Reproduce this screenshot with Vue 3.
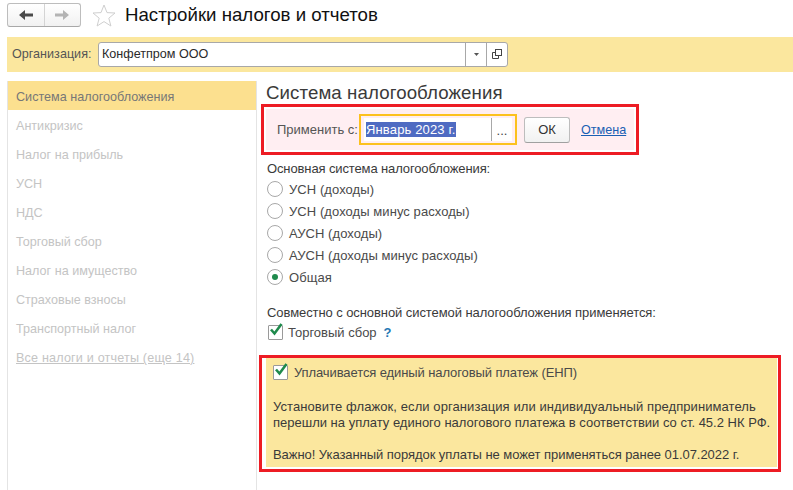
<script setup>
const navItems = ['Система налогообложения','Антикризис','Налог на прибыль','УСН','НДС','Торговый сбор','Налог на имущество','Страховые взносы','Транспортный налог']
const radios = [
  { label: 'УСН (доходы)', on: false },
  { label: 'УСН (доходы минус расходы)', on: false },
  { label: 'АУСН (доходы)', on: false },
  { label: 'АУСН (доходы минус расходы)', on: false },
  { label: 'Общая', on: true }
]
</script>

<template>
  <div class="page">
    <header class="top">
      <div class="navgroup">
        <button class="navbtn">
          <svg width="16" height="12" viewBox="0 0 16 12"><path d="M1 6 L7 1 V4.5 H15 V7.5 H7 V11 Z" fill="#4a4a4a"/></svg>
        </button>
        <button class="navbtn">
          <svg width="16" height="12" viewBox="0 0 16 12"><path d="M15 6 L9 1 V4.5 H1 V7.5 H9 V11 Z" fill="#b4b4b4"/></svg>
        </button>
      </div>
      <svg class="star" width="24" height="23" viewBox="0 0 24 23"><path d="M12 1 L15 8.6 L23 9 L16.8 14.2 L18.9 22 L12 17.6 L5.1 22 L7.2 14.2 L1 9 L9 8.6 Z" fill="#fff" stroke="#cfcfcf" stroke-width="1"/></svg>
      <h1 class="title">Настройки налогов и отчетов</h1>
    </header>

    <div class="orgbar">
      <span class="orglabel">Организация:</span>
      <div class="orgfield">
        <span class="orgval">Конфетпром ООО</span>
        <span class="orgbtn"><svg width="5" height="3" viewBox="0 0 5 3"><path d="M0 0H5L2.5 3Z" fill="#555"/></svg></span>
        <span class="orgbtn">
          <svg width="10" height="10" viewBox="0 0 10 10" fill="none" stroke="#444"><rect x="3.5" y="0.5" width="6" height="6" fill="#fff"/><path d="M3.5 3.5H0.5V9.5H6.5V6.5"/></svg>
        </span>
      </div>
    </div>

    <main class="body">
      <nav class="side">
        <div v-for="(n, i) in navItems" :key="n" class="sideitem" :class="{ active: i === 0 }">{{ n }}</div>
        <div class="sideitem"><span class="more">Все налоги и отчеты (еще 14)</span></div>
      </nav>

      <section class="content">
        <h2 class="heading">Система налогообложения</h2>

        <div class="applybox">
          <div class="applyinner">
            <span class="applylabel">Применить с:</span>
            <div class="datefield">
              <div class="dateinner">
                <span class="dateval"><span class="sel">Январь 2023 г.</span></span>
                <span class="datebtn">...</span>
              </div>
            </div>
            <button class="okbtn">ОК</button>
            <a class="cancel">Отмена</a>
          </div>
        </div>

        <div class="group">
          <div class="grouplabel first">Основная система налогообложения:</div>
          <div class="radios">
            <div v-for="r in radios" :key="r.label" class="radio">
              <span class="radiomark" :class="{ on: r.on }"></span>
              <span>{{ r.label }}</span>
            </div>
          </div>
        </div>

        <div class="group2">
          <div class="grouplabel second">Совместно с основной системой налогообложения применяется:</div>
          <div class="check">
            <span class="box">
              <svg class="tick" width="16" height="15" viewBox="0 0 16 15"><path d="M3 7.5 L6.5 11.5 L13.5 2" fill="none" stroke="#1f8a4c" stroke-width="2.6"/></svg>
            </span>
            <span>Торговый сбор</span>
            <span class="help">?</span>
          </div>
        </div>

        <div class="enpbox">
          <div class="enpinner">
            <div class="check enpcheck">
              <span class="box">
                <svg class="tick" width="16" height="15" viewBox="0 0 16 15"><path d="M3 7.5 L6.5 11.5 L13.5 2" fill="none" stroke="#1f8a4c" stroke-width="2.6"/></svg>
              </span>
              <span>Уплачивается единый налоговый платеж (ЕНП)</span>
            </div>
            <p class="enptext"><span class="wide">Установите флажок, если организация или индивидуальный предприниматель</span><br>перешли на уплату единого налогового платежа в соответствии со ст. 45.2 НК РФ.</p>
            <p class="enptext last">Важно! Указанный порядок уплаты не может применяться ранее 01.07.2022 г.</p>
          </div>
        </div>
      </section>
    </main>
  </div>
</template>

<style scoped>
.page {
  width: 793px;
  height: 490px;
  overflow: hidden;
  background: #fff;
  font-family: "Liberation Sans", Arial, sans-serif;
  font-size: 13px;
  color: #4a4a4a;
  box-sizing: border-box;
  padding-top: 3px;
}
.top {
  display: flex;
  align-items: center;
  height: 24px;
  padding-left: 7px;
}
.navgroup {
  display: flex;
  width: 74px;
  height: 24px;
  box-sizing: border-box;
  border: 1px solid #bdbdbd;
  border-bottom-color: #a8a8a8;
  border-radius: 3px;
  background: linear-gradient(#fff, #f1f1f1);
}
.navbtn {
  flex: 1;
  padding: 0;
  border: 0;
  background: none;
  display: flex;
  align-items: center;
  justify-content: center;
}
.navbtn + .navbtn { border-left: 1px solid #d4d4d4; }
.star { margin-left: 11px; }
.title {
  margin: 0 0 0 9px;
  font-size: 18.67px;
  font-weight: 400;
  color: #111;
  line-height: 24px;
  white-space: nowrap;
}
.orgbar {
  margin: 10px 0 0 7px;
  height: 35px;
  background: #fbe79e;
  display: flex;
  align-items: center;
  padding: 0 0 1px 5px;
  box-sizing: border-box;
}
.orglabel { width: 86px; color: #555; white-space: nowrap; font-size: 12.6px; }
.orgfield {
  width: 410px;
  height: 25px;
  box-sizing: border-box;
  background: #fff;
  border: 1px solid #a8a8a8;
  border-radius: 3px;
  display: flex;
  align-items: center;
}
.orgval { flex: 1; padding-left: 3px; color: #2a2a2a; font-size: 12.6px; }
.orgbtn {
  width: 20px;
  height: 100%;
  border-left: 1px solid #a8a8a8;
  display: flex;
  align-items: center;
  justify-content: center;
}
.body {
  display: flex;
  margin: 9px 0 0 7px;
  height: 409px;
}
.side {
  width: 250px;
  flex: none;
  box-sizing: border-box;
  border-left: 1px solid #e4e4e4;
  border-right: 1px solid #e4e4e4;
}
.sideitem {
  height: 29px;
  line-height: 33px;
  padding-left: 8px;
  font-size: 12.6px;
  color: #c4c4c4;
  white-space: nowrap;
}
.sideitem.active {
  background: #fce08f;
  color: #777;
}
.more { text-decoration: underline; letter-spacing: 0.18px; }
.content {
  flex: 1;
  min-width: 0;
  padding-left: 4px;
}
.heading {
  margin: 0 0 0 5px;
  font-size: 18.67px;
  font-weight: 400;
  line-height: 23px;
  letter-spacing: 0.1px;
  color: #3a3a3a;
  white-space: nowrap;
}
.applybox {
  width: 378px;
  height: 51px;
  box-sizing: border-box;
  border: 3px solid #ed1c24;
  background: #fff;
  padding: 2px;
}
.applyinner {
  height: 100%;
  background: #ffeef2;
  display: flex;
  align-items: center;
  padding-left: 11px;
}
.applylabel { width: 82px; color: #555; white-space: nowrap; }
.datefield {
  width: 158px;
  height: 31px;
  box-sizing: border-box;
  border: 2px solid #fcc11e;
  padding: 2px 3px;
}
.dateinner {
  height: 100%;
  background: #fff;
  display: flex;
  align-items: stretch;
}
.dateval {
  flex: 1;
  padding: 0 2px;
  display: flex;
  align-items: center;
}
.sel {
  background: #4f6bc2;
  color: #fff;
  line-height: 15px;
  letter-spacing: 0.15px;
}
.datebtn {
  width: 20px;
  border-left: 1px solid #a8a8a8;
  text-align: center;
  line-height: 26px;
  color: #444;
}
.okbtn {
  width: 46px;
  height: 26px;
  margin-left: 7px;
  padding: 0;
  font: inherit;
  color: #333;
  background: linear-gradient(#fff, #f1f1f1);
  border: 1px solid #bdbdbd;
  border-bottom-color: #a0a0a0;
  border-radius: 3px;
}
.cancel {
  margin-left: 11px;
  font-size: 12.6px;
  color: #1a5fb4;
  text-decoration: underline;
}
.group { margin: 6px 0 0 6px; }
.grouplabel {
  line-height: 15px;
  color: #3a3a3a;
  white-space: nowrap;
}
.grouplabel.first { letter-spacing: -0.12px; }
.grouplabel.second { letter-spacing: -0.08px; }
.radios { margin-top: 2px; }
.radio {
  display: flex;
  align-items: center;
  height: 22px;
  color: #4a4a4a;
  white-space: nowrap;
  letter-spacing: 0.07px;
}
.radiomark {
  width: 16px;
  height: 16px;
  box-sizing: border-box;
  border: 1px solid #a8a8a8;
  border-radius: 50%;
  margin-right: 6px;
  background: #fff;
  position: relative;
}
.radiomark.on::after {
  content: "";
  position: absolute;
  left: 4px;
  top: 4px;
  width: 6px;
  height: 6px;
  border-radius: 50%;
  background: #1f8a4c;
}
.group2 { margin: 17px 0 0 6px; }
.check {
  display: flex;
  align-items: center;
  height: 24px;
  white-space: nowrap;
}
.box {
  width: 15px;
  height: 15px;
  box-sizing: border-box;
  border: 1px solid #9a9a9a;
  border-radius: 1px;
  background: #fff;
  margin: 0 5px 0 1px;
  position: relative;
  flex: none;
}
.tick {
  position: absolute;
  left: -1px;
  top: -4px;
}
.help {
  margin-left: 7px;
  color: #1f77b4;
  font-weight: 700;
}
.enpbox {
  width: 522px;
  height: 117px;
  margin: 11px 0 0 -2px;
  box-sizing: border-box;
  border: 3px solid #ed1c24;
  background: #fff;
  padding: 0 1px 2px 4px;
}
.enpinner {
  height: 100%;
  background: #fbe79e;
  padding: 2px 0 0 6px;
  box-sizing: border-box;
}
.enpcheck { letter-spacing: -0.1px; }
.enpcheck .box { margin-right: 6px; }
.enptext {
  margin: 15px 0 0 1px;
  line-height: 16px;
  color: #3a3a3a;
  white-space: nowrap;
}
.enptext .wide { letter-spacing: 0.08px; }
.enptext.last { margin-top: 16px; letter-spacing: -0.055px; }
</style>

<style>
html, body { margin: 0; background: #fff; }
</style>
